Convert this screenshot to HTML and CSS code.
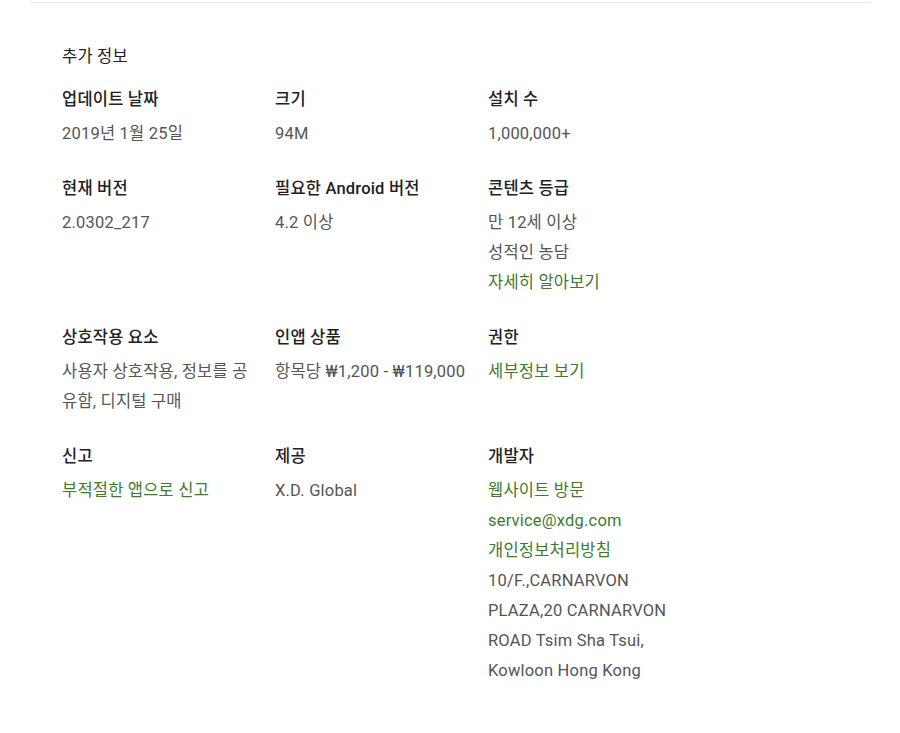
FILE: index.html
```html
<!DOCTYPE html>
<html lang="ko">
<head>
    <meta charset="UTF-8">
    <meta name="viewport" content="width=device-width, initial-scale=1.0">
    <title>추가 정보</title>
    <link rel="stylesheet" href="styles.css">
</head>
<body>
    <div class="container">
        <div class="section-title">추가 정보</div>

        <div class="info-grid">
            <div class="info">
                <div class="label">업데이트 날짜</div>
                <div class="value">2019년 1월 25일</div>
            </div>
            <div class="info">
                <div class="label">크기</div>
                <div class="value">94M</div>
            </div>
            <div class="info">
                <div class="label">설치 수</div>
                <div class="value">1,000,000+</div>
            </div>

            <div class="info">
                <div class="label">현재 버전</div>
                <div class="value">2.0302_217</div>
            </div>
            <div class="info">
                <div class="label">필요한 Android 버전</div>
                <div class="value">4.2 이상</div>
            </div>
            <div class="info">
                <div class="label">콘텐츠 등급</div>
                <div class="value">만 12세 이상</div>
                <div class="value">성적인 농담</div>
                <div class="value"><a href="#">자세히 알아보기</a></div>
            </div>

            <div class="info">
                <div class="label">상호작용 요소</div>
                <div class="value">사용자 상호작용, 정보를 공유함, 디지털 구매</div>
            </div>
            <div class="info">
                <div class="label">인앱 상품</div>
                <div class="value">항목당 ₩1,200 - ₩119,000</div>
            </div>
            <div class="info">
                <div class="label">권한</div>
                <div class="value"><a href="#">세부정보 보기</a></div>
            </div>

            <div class="info">
                <div class="label">신고</div>
                <div class="value"><a href="#">부적절한 앱으로 신고</a></div>
            </div>
            <div class="info">
                <div class="label">제공</div>
                <div class="value">X.D. Global</div>
            </div>
            <div class="info">
                <div class="label">개발자</div>
                <div class="value"><a href="#">웹사이트 방문</a></div>
                <div class="value"><a href="#">service@xdg.com</a></div>
                <div class="value"><a href="#">개인정보처리방침</a></div>
                <div class="value">10/F.,CARNARVON PLAZA,20 CARNARVON ROAD Tsim Sha Tsui, Kowloon Hong Kong</div>
            </div>
        </div>
    </div>
</body>
</html>
```

FILE: styles.css
```css
body {
    margin: 0;
    background-color: white;
    color: #333;
    font-family: Roboto, "Noto Sans CJK KR", sans-serif;
    font-size: 16.5px;
    letter-spacing: 0.2px;
}
.container {
    width: 840px;
    margin: 2px auto 0;
    border-top: 1px solid #e6e6e6;
    padding: 39px 32px 40px;
    box-sizing: border-box;
}
.section-title {
    line-height: 30px;
    color: #212121;
    margin-bottom: 13px;
}
.info-grid {
    display: grid;
    grid-template-columns: 195px 195px 195px;
    column-gap: 18px;
}
.info {
    margin-bottom: 25px;
}
.label {
    font-weight: 500;
    color: #212121;
    line-height: 30px;
    margin-bottom: 4px;
}
.value {
    line-height: 30px;
    color: #555;
}
.value a {
    color: #3f7a2f;
    text-decoration: none;
}
```
